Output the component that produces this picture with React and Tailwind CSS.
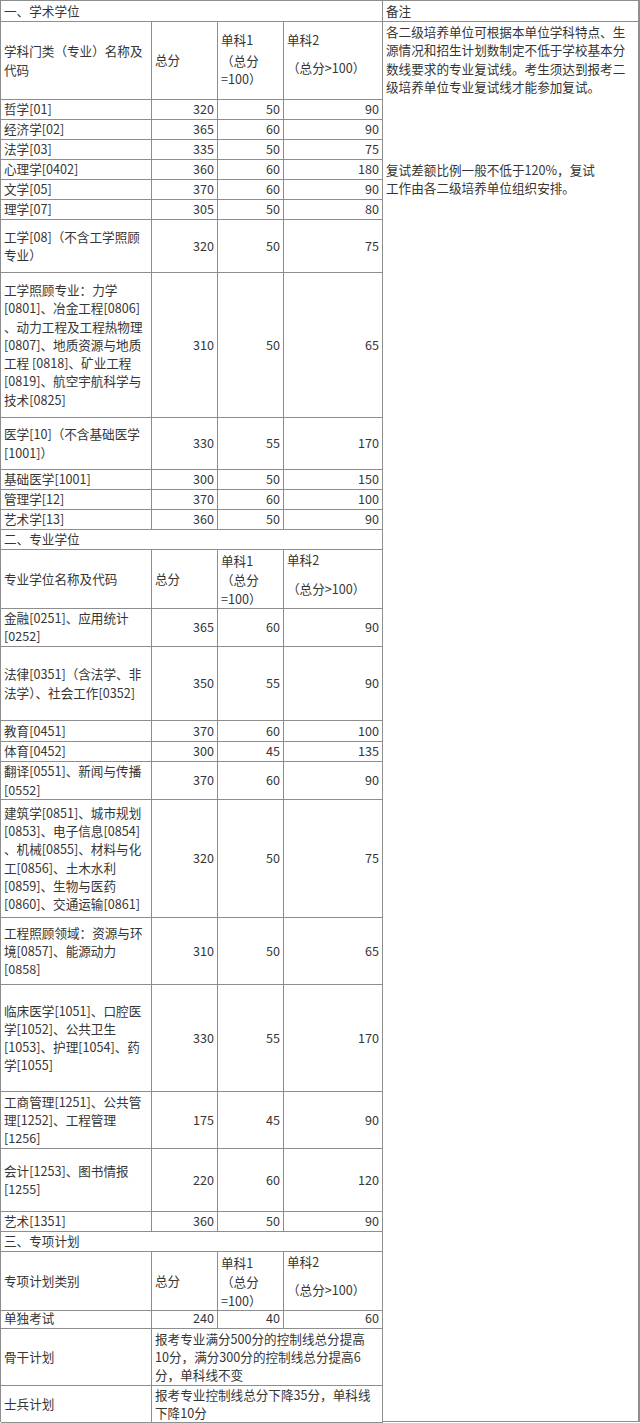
import React from "react";

const s1 = [
  { h: "h-[20px]", n: ["哲学[01]"], v: ["320", "50", "90"] },
  { h: "h-[20px]", n: ["经济学[02]"], v: ["365", "60", "90"] },
  { h: "h-[20px]", n: ["法学[03]"], v: ["335", "50", "75"] },
  { h: "h-[20px]", n: ["心理学[0402]"], v: ["360", "60", "180"] },
  { h: "h-[20px]", n: ["文学[05]"], v: ["370", "60", "90"] },
  { h: "h-[20px]", n: ["理学[07]"], v: ["305", "50", "80"] },
  { h: "h-[53px]", n: ["工学[08]（不含工学照顾", "专业）"], v: ["320", "50", "75"] },
  {
    h: "h-[145px]",
    n: [
      "工学照顾专业：力学",
      "[0801]、冶金工程[0806]",
      "、动力工程及工程热物理",
      "[0807]、地质资源与地质",
      "工程 [0818]、矿业工程",
      "[0819]、航空宇航科学与",
      "技术[0825]",
    ],
    v: ["310", "50", "65"],
  },
  { h: "h-[52px]", n: ["医学[10]（不含基础医学", "[1001]）"], v: ["330", "55", "170"] },
  { h: "h-[20px]", n: ["基础医学[1001]"], v: ["300", "50", "150"] },
  { h: "h-[20px]", n: ["管理学[12]"], v: ["370", "60", "100"] },
  { h: "h-[20px]", n: ["艺术学[13]"], v: ["360", "50", "90"] },
];

const s2 = [
  { h: "h-[39px]", n: ["金融[0251]、应用统计", "[0252]"], v: ["365", "60", "90"] },
  { h: "h-[74px]", n: ["法律[0351]（含法学、非", "法学）、社会工作[0352]"], v: ["350", "55", "90"] },
  { h: "h-[21px]", n: ["教育[0451]"], v: ["370", "60", "100"] },
  { h: "h-[20px]", n: ["体育[0452]"], v: ["300", "45", "135"] },
  { h: "h-[38px]", n: ["翻译[0551]、新闻与传播", "[0552]"], v: ["370", "60", "90"] },
  {
    h: "h-[118px]",
    n: [
      "建筑学[0851]、城市规划",
      "[0853]、电子信息[0854]",
      "、机械[0855]、材料与化",
      "工[0856]、土木水利",
      "[0859]、生物与医药",
      "[0860]、交通运输[0861]",
    ],
    v: ["320", "50", "75"],
  },
  { h: "h-[67px]", n: ["工程照顾领域：资源与环", "境[0857]、能源动力", "[0858]"], v: ["310", "50", "65"] },
  {
    h: "h-[107px]",
    n: ["临床医学[1051]、口腔医", "学[1052]、公共卫生", "[1053]、护理[1054]、药", "学[1055]"],
    v: ["330", "55", "170"],
  },
  { h: "h-[57px]", n: ["工商管理[1251]、公共管", "理[1252]、工程管理", "[1256]"], v: ["175", "45", "90"] },
  { h: "h-[63px]", n: ["会计[1253]、图书情报", "[1255]"], v: ["220", "60", "120"] },
  { h: "h-[20px]", n: ["艺术[1351]"], v: ["360", "50", "90"] },
];

const cell = "border-r border-b border-[#8e8e8e]";

function DataRow({ r }) {
  return (
    <div className={`grid grid-cols-[151px_66px_66px_99px] ${r.h}`}>
      <div className={`flex flex-col justify-center pl-[3px] ${cell}`}>
        {r.n.map((l) => (
          <div key={l} className="whitespace-nowrap leading-[18.2px]">
            {l}
          </div>
        ))}
      </div>
      {r.v.map((x, i) => (
        <div key={i} className={`flex items-center justify-end pr-[3px] leading-[18.2px] ${cell}`}>
          {x}
        </div>
      ))}
    </div>
  );
}

function TitleRow({ text, h }) {
  return (
    <div className={`flex items-center pl-[3px] leading-[18.2px] ${h} ${cell}`}>{text}</div>
  );
}

function HeaderRow({ h, name, pt, lead3, mt2, mt4 }) {
  return (
    <div className={`grid grid-cols-[151px_66px_66px_99px] ${h}`}>
      <div className={`flex items-center pl-[3px] leading-[18.2px] ${cell}`}>
        <div>
          {name.map((l) => (
            <div key={l} className="whitespace-nowrap">
              {l}
            </div>
          ))}
        </div>
      </div>
      <div className={`flex items-center pl-[3px] leading-[18.2px] ${cell}`}>总分</div>
      <div className={`flex flex-col pl-[3px] ${pt} ${lead3} ${cell}`}>
        <div>单科1</div>
        <div className={`whitespace-nowrap ${mt2}`}>（总分</div>
        <div className="whitespace-nowrap">=100）</div>
      </div>
      <div className={`flex flex-col pl-[3px] leading-[18.2px] ${pt} ${cell}`}>
        <div>单科2</div>
        <div className={`whitespace-nowrap ${mt4}`}>（总分&gt;100）</div>
      </div>
    </div>
  );
}

function SpanRow({ h, name, lines }) {
  return (
    <div className={`grid grid-cols-[151px_231px] ${h}`}>
      <div className={`flex items-center pl-[3px] leading-[18.2px] ${cell}`}>{name}</div>
      <div className={`flex flex-col justify-center pl-[3px] leading-[18.2px] ${cell}`}>
        {lines.map((l) => (
          <div key={l} className="whitespace-nowrap">
            {l}
          </div>
        ))}
      </div>
    </div>
  );
}

export default function App() {
  return (
    <div className="w-[640px] h-[1423px] bg-white text-[#353535] text-[12.6px] font-['Noto_Sans_CJK_SC','Noto_Sans',sans-serif]">
      <div className="flex border-t border-l border-[#8e8e8e]">
        <div className="w-[382px] shrink-0 flex flex-col">
          <TitleRow text="一、学术学位" h="h-[21px]" />
          <HeaderRow
            h="h-[78px]"
            name={["学科门类（专业）名称及", "代码"]}
            pt="pt-[9px]"
            lead3="leading-[18.2px]"
            mt2="mt-[3px]"
            mt4="mt-[10px]"
          />
          {s1.map((r) => (
            <DataRow key={r.n[0]} r={r} />
          ))}
          <TitleRow text="二、专业学位" h="h-[20px]" />
          <HeaderRow
            h="h-[58px]"
            name={["专业学位名称及代码"]}
            pt="pt-[1px]"
            lead3="leading-[19px]"
            mt2="mt-0"
            mt4="mt-[11px]"
          />
          {s2.map((r) => (
            <DataRow key={r.n[0]} r={r} />
          ))}
          <TitleRow text="三、专项计划" h="h-[20px]" />
          <HeaderRow
            h="h-[57px]"
            name={["专项计划类别"]}
            pt="pt-[1px]"
            lead3="leading-[19px]"
            mt2="mt-0"
            mt4="mt-[10px]"
          />
          <DataRow r={{ h: "h-[20px]", n: ["单独考试"], v: ["240", "40", "60"] }} />
          <SpanRow
            h="h-[57px]"
            name="骨干计划"
            lines={["报考专业满分500分的控制线总分提高", "10分，满分300分的控制线总分提高6", "分，单科线不变"]}
          />
          <SpanRow h="h-[36px]" name="士兵计划" lines={["报考专业控制线总分下降35分，单科线", "下降10分"]} />
        </div>
        <div className="flex-1 flex flex-col border-r-2 border-b border-[#8e8e8e]">
          <div className="h-[21px] flex items-center pl-[3px] leading-[18.2px] border-b border-[#8e8e8e]">
            备注
          </div>
          <div className="flex-1 pl-[3px] pt-[1px] leading-[18.4px]">
            <div className="whitespace-nowrap">各二级培养单位可根据本单位学科特点、生</div>
            <div className="whitespace-nowrap">源情况和招生计划数制定不低于学校基本分</div>
            <div className="whitespace-nowrap">数线要求的专业复试线。考生须达到报考二</div>
            <div className="whitespace-nowrap">级培养单位专业复试线才能参加复试。</div>
            <div className="whitespace-nowrap mt-[64px]">复试差额比例一般不低于120%，复试</div>
            <div className="whitespace-nowrap">工作由各二级培养单位组织安排。</div>
          </div>
        </div>
      </div>
    </div>
  );
}
